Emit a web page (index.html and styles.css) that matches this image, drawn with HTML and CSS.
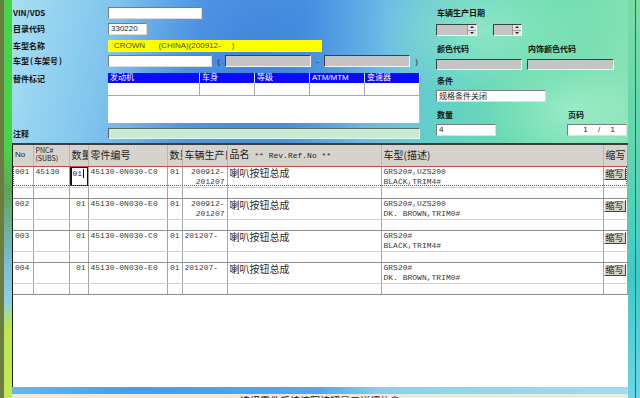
FILE: index.html
```html
<!DOCTYPE html>
<html lang="zh-CN">
<head>
    <meta charset="UTF-8">
    <title>零件检索</title>
    <link rel="stylesheet" href="styles.css">
</head>
<body>
    <div class="window">
        <div class="edge-left"></div>

        <div class="main">
            <div class="form">
                <!-- 左侧：车型信息 -->
                <div class="form-left">
                    <div class="row">
                        <label>VIN/VDS</label>
                        <span class="field w-vin"></span>
                    </div>
                    <div class="row mt4">
                        <label>目录代码</label>
                        <span class="field w-cat">330220</span>
                    </div>
                    <div class="row mt5">
                        <label>车型名称</label>
                        <span class="field field-yellow w-name">CROWN      (CHINA)(200912-     )</span>
                    </div>
                    <div class="row mt3">
                        <label>车型<span class="paren">(</span>车架号<span class="paren">)</span></label>
                        <span class="field w-frame"></span>
                        <span class="sep">(</span>
                        <span class="field field-gray w-range"></span>
                        <span class="sep">-</span>
                        <span class="field field-gray w-range"></span>
                        <span class="sep">)</span>
                    </div>
                    <div class="row row-tall mt6">
                        <label>替件标记</label>
                        <div class="spec">
                            <div class="spec-head">
                                <span class="c1">发动机</span>
                                <span class="c2">车身</span>
                                <span class="c2">等级</span>
                                <span class="c2">ATM/MTM</span>
                                <span class="c2">变速器</span>
                            </div>
                            <div class="spec-row">
                                <span class="c1"></span>
                                <span class="c2"></span>
                                <span class="c2"></span>
                                <span class="c2"></span>
                                <span class="c2"></span>
                            </div>
                            <div class="spec-blank"></div>
                        </div>
                    </div>
                    <div class="row row-note mt5">
                        <label>注释</label>
                        <span class="field field-green w-note"></span>
                    </div>
                </div>

                <!-- 右侧：日期 / 颜色 / 条件 -->
                <div class="form-right">
                    <div class="rlabel">车辆生产日期</div>
                    <div class="rline mt6">
                        <span class="spin w-spin1"><span class="spin-btns"><i class="up"></i><i class="dn"></i></span></span>
                        <span class="dash">-</span>
                        <span class="spin w-spin2"><span class="spin-btns"><i class="up"></i><i class="dn"></i></span></span>
                    </div>
                    <div class="rline mt8">
                        <span class="rlabel w-col1">颜色代码</span>
                        <span class="rlabel">内饰颜色代码</span>
                    </div>
                    <div class="rline mt5">
                        <span class="field field-gray w-col1 h11"></span>
                        <span class="field field-gray w-col2 h11"></span>
                    </div>
                    <div class="rlabel mt6">条件</div>
                    <div class="rline mt4">
                        <span class="field w-cond">规格条件关闭</span>
                    </div>
                    <div class="rline mt8">
                        <span class="rlabel w-qty-l">数量</span>
                        <span class="rlabel">页码</span>
                    </div>
                    <div class="rline mt4">
                        <span class="field w-qty">4</span>
                        <span class="field w-page page"><b>1</b><b>/</b><b>1</b></span>
                    </div>
                </div>
            </div>

            <!-- 零件列表 -->
            <div class="grid">
                <table class="parts">
                    <colgroup>
                        <col style="width:20px"><col style="width:36px"><col style="width:19px">
                        <col style="width:79px"><col style="width:15px"><col style="width:45px">
                        <col style="width:154px"><col style="width:222px"><col>
                    </colgroup>
                    <thead>
                        <tr>
                            <th class="small">No</th>
                            <th class="mono tiny">PNC#<br>(SUBS)</th>
                            <th>数量</th>
                            <th>零件编号</th>
                            <th>数量</th>
                            <th>车辆生产日期</th>
                            <th>品名<span class="mono"> ** Rev.Ref.No **</span></th>
                            <th>车型(描述)</th>
                            <th class="th-btn">缩写</th>
                        </tr>
                    </thead>
                    <tbody>
                        <tr class="main-row">
                            <td class="mono">001</td>
                            <td class="mono">45130</td>
                            <td class="cell-focus"><span class="focus">01<i class="caret"></i></span></td>
                            <td class="mono">45130-0N030-C0</td>
                            <td class="mono num">01</td>
                            <td class="mono num">200912-<br>201207</td>
                            <td class="cjk">喇叭按钮总成</td>
                            <td class="mono">GRS20#,UZS200<br>BLACK,TRIM4#</td>
                            <td class="cell-btn"><span class="btn">缩写</span></td>
                        </tr>
                        <tr class="sub-row"><td></td><td></td><td></td><td></td><td></td><td></td><td></td><td></td><td></td></tr>

                        <tr class="main-row">
                            <td class="mono">002</td>
                            <td></td>
                            <td class="mono num">01</td>
                            <td class="mono">45130-0N030-E0</td>
                            <td class="mono num">01</td>
                            <td class="mono num">200912-<br>201207</td>
                            <td class="cjk">喇叭按钮总成</td>
                            <td class="mono">GRS20#,UZS200<br>DK. BROWN,TRIM0#</td>
                            <td class="cell-btn"><span class="btn">缩写</span></td>
                        </tr>
                        <tr class="sub-row"><td></td><td></td><td></td><td></td><td></td><td></td><td></td><td></td><td></td></tr>

                        <tr class="main-row">
                            <td class="mono">003</td>
                            <td></td>
                            <td class="mono num">01</td>
                            <td class="mono">45130-0N030-C0</td>
                            <td class="mono num">01</td>
                            <td class="mono">201207-</td>
                            <td class="cjk">喇叭按钮总成</td>
                            <td class="mono">GRS20#<br>BLACK,TRIM4#</td>
                            <td class="cell-btn"><span class="btn">缩写</span></td>
                        </tr>
                        <tr class="sub-row"><td></td><td></td><td></td><td></td><td></td><td></td><td></td><td></td><td></td></tr>

                        <tr class="main-row">
                            <td class="mono">004</td>
                            <td></td>
                            <td class="mono num">01</td>
                            <td class="mono">45130-0N030-E0</td>
                            <td class="mono num">01</td>
                            <td class="mono">201207-</td>
                            <td class="cjk">喇叭按钮总成</td>
                            <td class="mono">GRS20#<br>DK. BROWN,TRIM0#</td>
                            <td class="cell-btn"><span class="btn">缩写</span></td>
                        </tr>
                        <tr class="sub-row"><td></td><td></td><td></td><td></td><td></td><td></td><td></td><td></td><td></td></tr>
                    </tbody>
                </table>
                <div class="selected"></div>
            </div>

            <div class="band"></div>
            <div class="status">选择零件后按缩写按钮显示详细信息</div>
        </div>

        <div class="edge-right"></div>
    </div>
</body>
</html>
```

FILE: styles.css
```css
* {
    box-sizing: border-box;
}

html, body {
    margin: 0;
    padding: 0;
}

body {
    width: 640px;
    height: 398px;
    overflow: hidden;
    font-family: "Liberation Sans", "Noto Sans CJK SC", sans-serif;
    font-size: 8px;
    color: #111;
}

.window {
    display: flex;
    height: 398px;
}

.edge-left {
    width: 12px;
    flex: none;
    border-left: 4px solid #6b7c44;
    background: linear-gradient(to bottom, #46d44a 0%, #46d44a 38%, #5fa35a 48%, #78bcd6 66%, #8cd0e8 76%, #bde64c 82%, #c4ea52 100%);
}

.edge-right {
    width: 12px;
    flex: none;
    background:
        linear-gradient(to right, transparent 7px, #2f6e5c 7px, #2f6e5c 8px, transparent 8px),
        linear-gradient(to bottom, #7adca6 0%, #5cd6b0 40%, #3ecac8 70%, #6cd6e6 100%);
}

.main {
    flex: 1;
    min-width: 0;
    display: flex;
    flex-direction: column;
    background:
        radial-gradient(ellipse 110px 70px at 470px 30px, rgba(170, 245, 200, 0.55), transparent),
        radial-gradient(ellipse 140px 150px at 240px 60px, rgba(40, 110, 215, 0.5), transparent),
        radial-gradient(ellipse 90px 50px at 560px 110px, rgba(190, 250, 220, 0.45), transparent),
        linear-gradient(102deg, #a8def2 0%, #82c6ee 14%, #5a9fe6 28%, #4f98e2 42%, #6cbbe6 54%, #62d0c8 64%, #6cdab0 76%, #86e2b6 90%, #7adcac 100%);
}

/* ---------- 表单区 ---------- */

.form {
    height: 143px;
    display: flex;
}

.form-left {
    width: 416px;
    flex: none;
    padding: 7px 0 0 1px;
}

.form-right {
    flex: 1;
    padding: 8px 0 0 8px;
}

.row {
    display: flex;
    align-items: center;
    height: 12px;
}

.row label {
    width: 95px;
    flex: none;
    font-family: "Noto Sans CJK SC", sans-serif;
    font-weight: bold;
    font-size: 8px;
    line-height: 10px;
}

.paren {
    margin: 0 1px;
}

.row-tall {
    height: 50px;
    align-items: flex-start;
}

.row-tall label {
    padding-top: 1px;
}

.row-note {
    height: 11px;
}

.mt3 { margin-top: 3px; }
.mt4 { margin-top: 4px; }
.mt5 { margin-top: 5px; }
.mt6 { margin-top: 6px; }
.mt8 { margin-top: 8px; }

.field {
    display: block;
    height: 12px;
    padding: 0 2px;
    line-height: 10px;
    background: #fff;
    border: 1px solid;
    border-color: #7c7c7c #dcdcdc #dcdcdc #7c7c7c;
    font-size: 8px;
    color: #222;
    white-space: pre;
    overflow: hidden;
    flex: none;
}

.field-yellow {
    background: #ffff00;
    border-color: #ffff00;
    color: #4a4a3a;
    padding-left: 5px;
}

.field-gray {
    background: #c4c4c4;
    border-color: #404040 #f4f4f4 #f4f4f4 #404040;
}

.field-green {
    background: #c8ecd2;
    border-color: #5a6a60 #e8f8ee #e8f8ee #5a6a60;
    height: 11px;
}

.h11 {
    height: 11px;
}

.w-vin { width: 94px; }
.w-cat { width: 39px; }
.w-name { width: 214px; }
.w-frame { width: 104px; }
.w-range { width: 86px; }
.w-note { width: 312px; }

.sep {
    width: 13px;
    flex: none;
    text-align: center;
    font-size: 8px;
    color: #222;
}

/* 替件标记 */

.spec {
    width: 312px;
    height: 50px;
    background: #fff;
}

.spec-head,
.spec-row {
    display: flex;
}

.spec-head span {
    height: 10px;
    line-height: 10px;
    background: #0a0aff;
    color: #fff;
    padding-left: 2px;
    border-right: 1px solid #d8dcff;
    font-size: 8px;
    font-family: "Liberation Sans", "Noto Sans CJK SC", sans-serif;
}

.spec-row span {
    height: 13px;
    border-right: 1px solid #a8a8a8;
    border-bottom: 1px solid #a8a8a8;
}

.spec .c1 { width: 92px; }
.spec .c2 { width: 55px; }

.spec-blank {
    height: 27px;
    border-right: 1px solid #bcbcbc;
}

/* 右侧 */

.rlabel {
    display: block;
    height: 10px;
    line-height: 10px;
    font-family: "Noto Sans CJK SC", sans-serif;
    font-weight: bold;
    font-size: 8px;
    padding-left: 1px;
    flex: none;
}

.rline {
    display: flex;
    align-items: center;
}

.w-col1 { width: 91px; }
.w-col2 { width: 87px; }
.w-col1.field { width: 86px; margin-right: 5px; }
.w-cond { width: 110px; font-family: "Noto Sans CJK SC", sans-serif; }
.w-qty-l { width: 131px; }
.w-qty { width: 60px; margin-right: 71px; }
.w-page { width: 60px; }

.page {
    display: flex;
    justify-content: space-around;
    padding: 0 6px 0 10px;
}

.page b {
    font-weight: normal;
}

.spin {
    position: relative;
    display: block;
    height: 12px;
    background: #c4c4c4;
    border: 1px solid;
    border-color: #404040 #f4f4f4 #f4f4f4 #404040;
    flex: none;
}

.w-spin1 { width: 41px; }
.w-spin2 { width: 29px; }

.spin-btns {
    position: absolute;
    top: 0;
    right: 0;
    width: 9px;
    height: 10px;
    display: flex;
    flex-direction: column;
    background: #e4e4e4;
    border-left: 1px solid #9a9a9a;
}

.spin-btns i {
    flex: 1;
    display: flex;
    align-items: center;
    justify-content: center;
}

.spin-btns .up {
    border-bottom: 1px solid #9a9a9a;
}

.spin-btns .up::after,
.spin-btns .dn::after {
    content: "";
    border-left: 2px solid transparent;
    border-right: 2px solid transparent;
}

.spin-btns .up::after {
    border-bottom: 2px solid #222;
}

.spin-btns .dn::after {
    border-top: 2px solid #222;
}

.dash {
    width: 16px;
    text-align: center;
    color: #8fb;
    font-size: 8px;
}

/* ---------- 零件列表 ---------- */

.grid {
    position: relative;
    width: 616px;
    height: 244px;
    flex: none;
    background: #fff;
    border-top: 2px solid #3c3c3c;
    border-left: 1px solid #1a1a1a;
    overflow: hidden;
}

.parts {
    width: 100%;
    table-layout: fixed;
    border-collapse: collapse;
}

.parts th,
.parts td {
    padding: 0 2px;
    vertical-align: top;
    overflow: hidden;
    white-space: nowrap;
    border-left: 1px solid #a4a4a4;
    text-align: left;
}

.parts th:first-child,
.parts td:first-child {
    border-left: none;
}

.parts th:last-child,
.parts td:last-child {
    border-right: 1px solid #a4a4a4;
}

.parts thead tr {
    height: 21px;
}

.parts th {
    height: 21px;
    background: #d6d3cc;
    border-left-color: #b8b6b0;
    border-bottom: 1px solid #7a7a7a;
    font-family: "Noto Sans CJK SC", sans-serif;
    font-weight: normal;
    font-size: 10px;
    line-height: 12px;
    color: #222;
    vertical-align: middle;
}

.parts th.small {
    font-family: "Liberation Sans", sans-serif;
    font-size: 8px;
    vertical-align: top;
    padding-top: 4px;
}

.parts th.tiny {
    font-size: 7px;
    line-height: 8px;
    vertical-align: top;
    padding-top: 1px;
}

.parts th.th-btn {
    padding: 0 0 0 2px;
}

.parts th .mono {
    font-size: 8px;
}

.mono {
    font-family: "Liberation Mono", monospace;
}

.main-row {
    height: 21px;
}

.main-row td {
    height: 21px;
    border-top: 1px solid #8c8c8c;
    border-bottom: 1px solid #d0d0d0;
    font-size: 8px;
    line-height: 10px;
    padding-top: 0;
    color: #3a3a3a;
}

.main-row td.cjk {
    font-family: "Noto Sans CJK SC", sans-serif;
    font-size: 10px;
    line-height: 11px;
    color: #2a2a2a;
}

.parts tbody tr:first-child td {
    border-top: none;
}

.parts td.num {
    text-align: right;
}

.sub-row {
    height: 11px;
}

.sub-row td {
    height: 11px;
    border-bottom: 1px solid #8c8c8c;
}

.parts td.cell-focus {
    padding: 0;
}

.parts td.cell-btn {
    padding: 1px 0 0 0;
}

.focus {
    display: block;
    height: 19px;
    padding: 1px 0 0 1px;
    border: 1px solid #111;
    border-left-width: 2px;
    font-family: "Liberation Mono", monospace;
    color: #222;
}

.caret {
    display: inline-block;
    width: 1px;
    height: 9px;
    margin-left: 1px;
    vertical-align: top;
    background: #000;
}

.btn {
    display: block;
    width: 22px;
    height: 12px;
    background: #d6d3cc;
    border: 1px solid;
    border-color: #fff #404040 #404040 #fff;
    font-family: "Noto Sans CJK SC", sans-serif;
    font-size: 9px;
    line-height: 10px;
    text-align: center;
    color: #111;
}

.selected {
    position: absolute;
    top: 21px;
    left: 0;
    width: 614px;
    height: 20px;
    border: 1px dotted #c03838;
    pointer-events: none;
}

/* ---------- 底部 ---------- */

.band {
    height: 7px;
    flex: none;
    background: linear-gradient(to right, #68b6ea 0%, #4a9ae6 20%, #5aa6e8 50%, #8ad0ee 60%, #9edcf0 100%);
}

.status {
    height: 4px;
    flex: none;
    overflow: hidden;
    background: #eceada;
    text-align: center;
    font-family: "Noto Sans CJK SC", sans-serif;
    font-size: 10px;
    line-height: 12px;
    padding-top: 1px;
    color: #111;
}
```
